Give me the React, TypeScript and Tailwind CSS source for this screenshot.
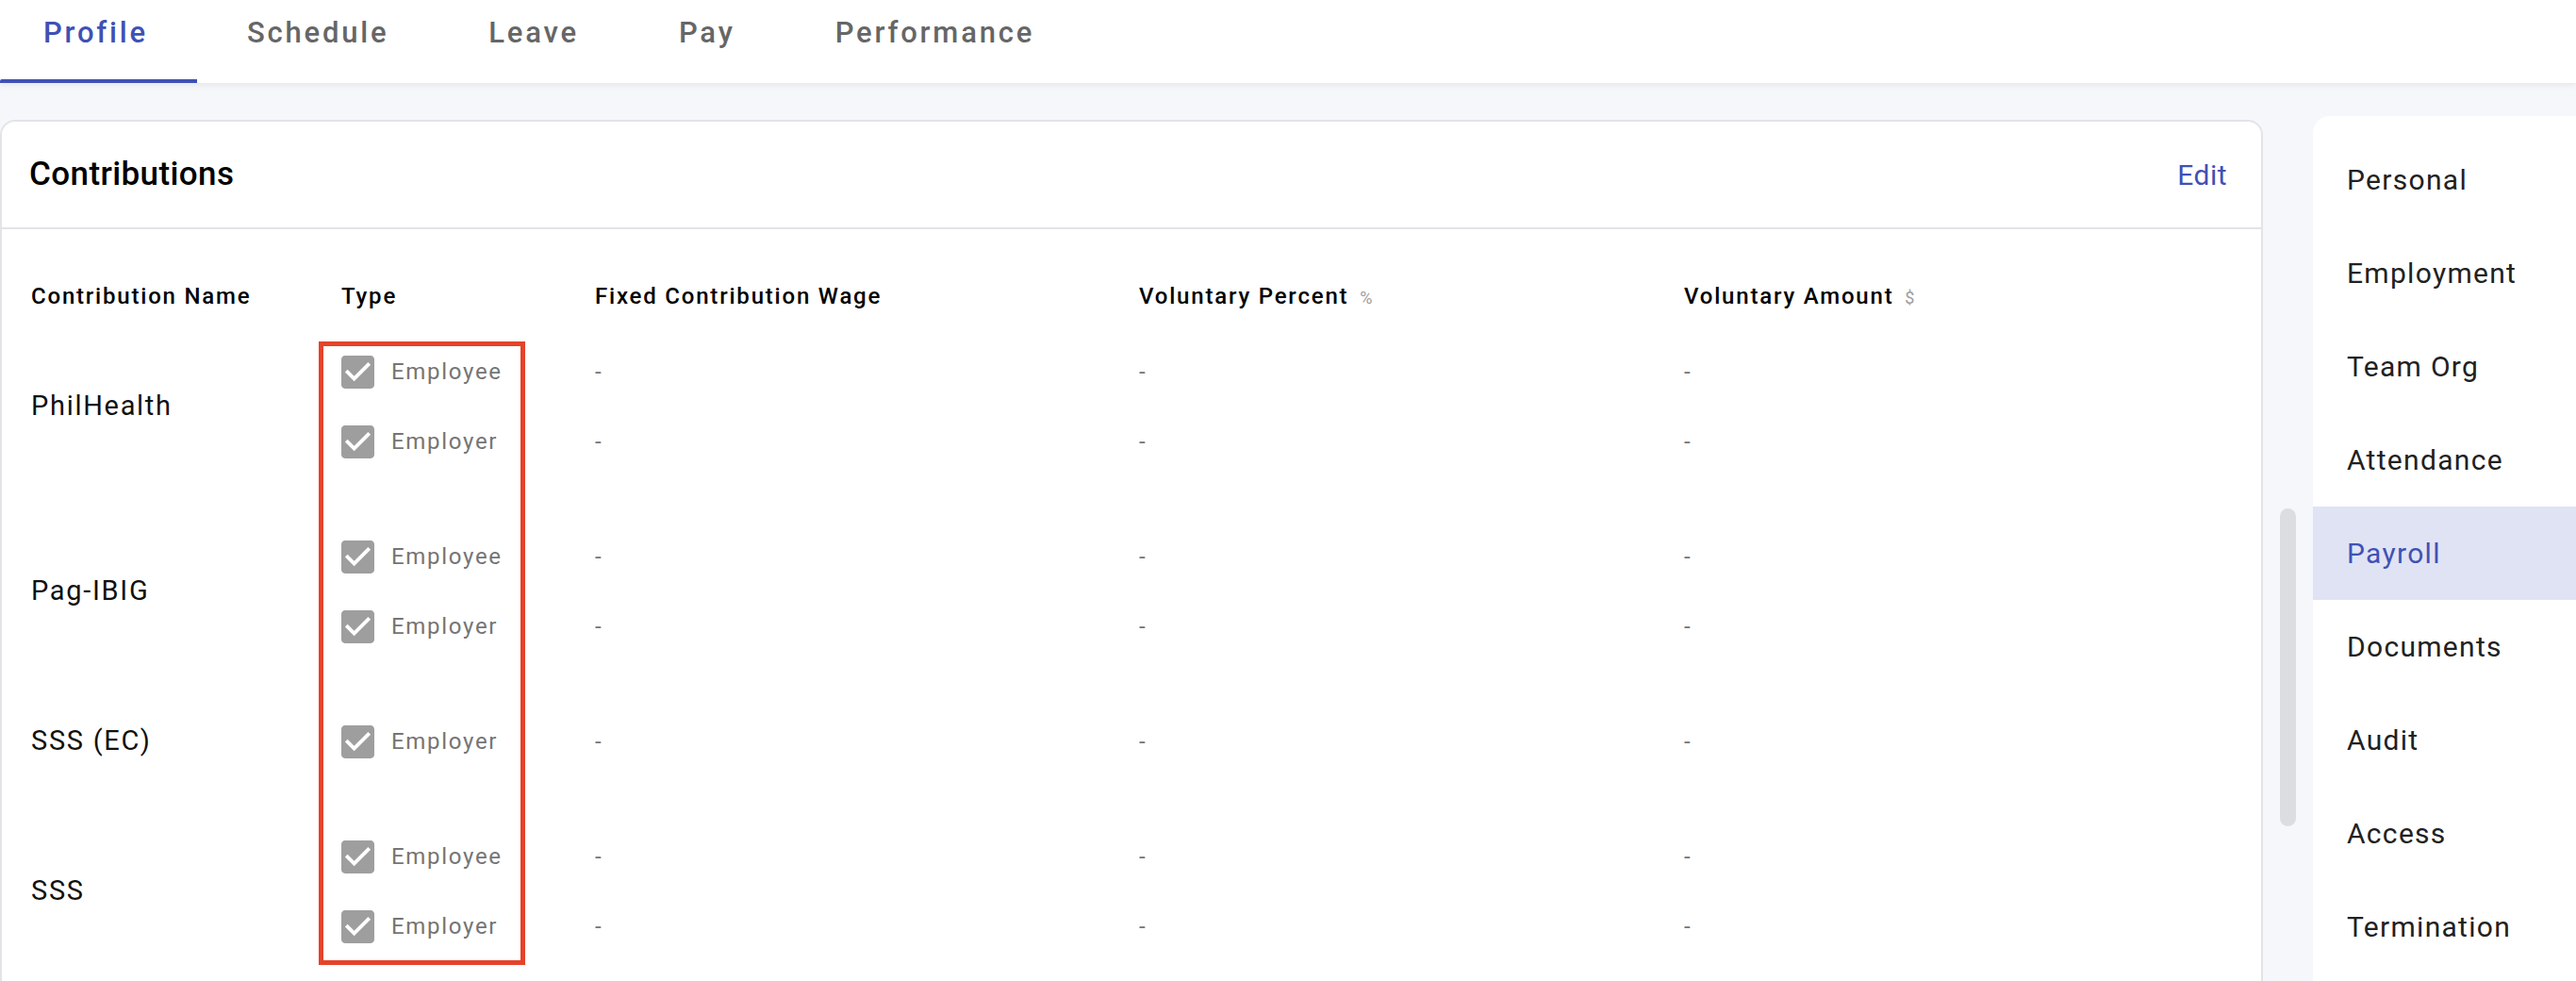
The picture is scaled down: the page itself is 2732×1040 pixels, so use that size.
const tabs = ["Profile", "Schedule", "Leave", "Pay", "Performance"];

const sideItems = [
  "Personal",
  "Employment",
  "Team Org",
  "Attendance",
  "Payroll",
  "Documents",
  "Audit",
  "Access",
  "Termination",
];

const contributions = [
  { name: "PhilHealth", types: ["Employee", "Employer"] },
  { name: "Pag-IBIG", types: ["Employee", "Employer"] },
  { name: "SSS (EC)", types: ["Employer"] },
  { name: "SSS", types: ["Employee", "Employer"] },
];

function CheckedBox() {
  return (
    <svg viewBox="3 3 18 18" className="w-[35px] h-[35px] shrink-0">
      <path
        fill="#9e9e9e"
        d="M19 3H5c-1.11 0-2 .9-2 2v14c0 1.1.89 2 2 2h14c1.11 0 2-.9 2-2V5c0-1.1-.89-2-2-2zm-9 14l-5-5 1.41-1.41L10 14.17l7.59-7.59L19 8l-9 9z"
      />
    </svg>
  );
}

function Dashes({ count }: { count: number }) {
  return (
    <div className="flex flex-col">
      {Array.from({ length: count }).map((_, i) => (
        <div key={i} className="h-[74px] flex items-center text-[24px] text-[#757575]">
          -
        </div>
      ))}
    </div>
  );
}

export default function App() {
  return (
    <div className="w-[2732px] h-[1040px] overflow-hidden bg-[#f6f7fb] font-['Roboto',sans-serif]">
      {/* top tabs */}
      <div className="relative z-10 h-[88px] bg-white shadow-[0_3px_6px_rgba(0,0,0,0.06)] flex">
        {tabs.map((t, i) => (
          <div
            key={t}
            className={
              "relative h-full pt-[17px] text-[31px] leading-[36px] font-medium tracking-[2.8px] " +
              (i === 0 ? "pl-[46px] pr-[52px] text-[#3f51b5]" : "px-[53px] text-[#666666]")
            }
          >
            {t}
            {i === 0 && <div className="absolute left-0 right-0 bottom-0 h-[4px] bg-[#3f51b5] rounded-tl-[2px]" />}
          </div>
        ))}
      </div>

      <div className="flex items-start mt-[35px]">
        {/* main card */}
        <div className="mt-[4px] w-[2400px] h-[1000px] shrink-0 bg-white border-2 border-[#e3e4e8] rounded-[16px]">
          <div className="h-[114px] border-b-2 border-[#e1e4e8] flex items-center justify-between pl-[29px] pr-[36px]">
            <h2 className="text-[35px] font-medium tracking-[0.4px] text-black">Contributions</h2>
            <button className="text-[30px] text-[#3f51b5] tracking-[0.5px]">Edit</button>
          </div>

          <div className="relative">
            <div className="grid grid-cols-[329px_269px_577px_578px_1fr] pl-[31px] pt-[57px] pb-[3px] text-[24px] leading-[28px] font-medium tracking-[1.8px] text-black">
              <div>Contribution Name</div>
              <div>Type</div>
              <div>Fixed Contribution Wage</div>
              <div>
                Voluntary Percent <span className="ml-[4px] text-[18px] font-normal text-[#9e9e9e] tracking-normal">%</span>
              </div>
              <div>
                Voluntary Amount <span className="ml-[4px] text-[18px] font-normal text-[#9e9e9e] tracking-normal">$</span>
              </div>
            </div>

            {contributions.map((c) => (
              <div key={c.name} className="grid grid-cols-[329px_269px_577px_578px_1fr] pl-[31px] py-[24px] items-center">
                <div className="text-[29px] tracking-[1.7px] text-[#111111]">{c.name}</div>
                <div className="flex flex-col">
                  {c.types.map((t) => (
                    <div key={t} className="h-[74px] flex items-center gap-[18px]">
                      <CheckedBox />
                      <span className="text-[24px] tracking-[1.7px] text-[#757575]">{t}</span>
                    </div>
                  ))}
                </div>
                <Dashes count={c.types.length} />
                <Dashes count={c.types.length} />
                <Dashes count={c.types.length} />
              </div>
            ))}

            {/* highlight annotation */}
            <div className="absolute left-[336px] top-[119px] w-[219px] h-[661px] border-[5px] border-[#e5432a] pointer-events-none" />
          </div>
        </div>

        {/* scrollbar gutter */}
        <div className="w-[53px] shrink-0 pl-[18px]">
          <div className="mt-[416px] w-[17px] h-[337px] rounded-full bg-[#dcdde1]" />
        </div>

        {/* side nav */}
        <div className="flex-1 h-[1000px] bg-white rounded-tl-[18px] pt-[18px]">
          {sideItems.map((s) => (
            <div
              key={s}
              className={
                "h-[99px] flex items-center pl-[36px] text-[30px] tracking-[1.3px] " +
                (s === "Payroll" ? "bg-[#e0e3f4] text-[#3f51b5]" : "text-[#212121]")
              }
            >
              {s}
            </div>
          ))}
        </div>
      </div>
    </div>
  );
}
